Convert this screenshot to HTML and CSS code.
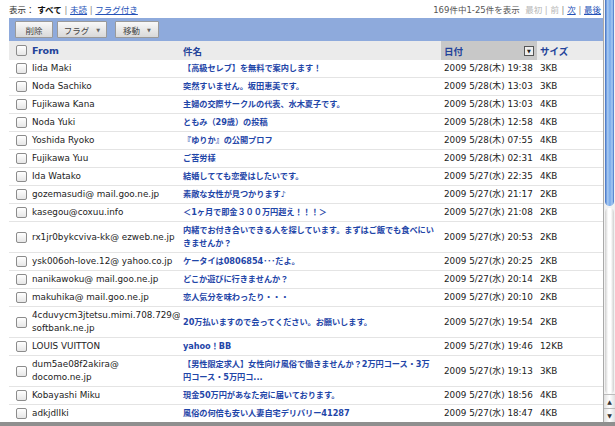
FILE: index.html
```html
<!DOCTYPE html>
<html lang="ja">
<head>
<meta charset="utf-8">
<link rel="stylesheet" href="styles.css">
</head>
<body>
<div class="window">
  <div class="main">
    <div class="topline">
      <div class="filter">表示： <b>すべて</b> <span class="sep">|</span> <a>未読</a> <span class="sep">|</span> <a>フラグ付き</a></div>
      <div class="pager">169件中1-25件を表示 &nbsp;<span class="dim">最初 | 前</span> <span class="sep">|</span> <a>次</a> <span class="sep">|</span> <a>最後</a></div>
    </div>
    <div class="toolbar">
      <span class="btn del">削除</span>
      <span class="btn menu flag">フラグ <i class="caret">▼</i></span>
      <span class="btn menu move">移動 <i class="caret">▼</i></span>
    </div>
    <table class="list">
      <colgroup><col class="c-chk"><col class="c-from"><col class="c-subj"><col class="c-date"><col class="c-size"></colgroup>
      <thead>
        <tr><th><span class="cb"></span></th><th>From</th><th>件名</th><th class="sorted"><span class="sorthead">日付<span class="sorticon">▼</span></span></th><th>サイズ</th></tr>
      </thead>
      <tbody>
        <tr><td><span class="cb"></span></td><td>Iida Maki</td><td class="subj">【高級セレブ】を無料で案内します！</td><td>2009 5/28(木) 19:38</td><td>3KB</td></tr>
        <tr><td><span class="cb"></span></td><td>Noda Sachiko</td><td class="subj">突然すいません。坂田恵美です。</td><td>2009 5/28(木) 13:03</td><td>3KB</td></tr>
        <tr><td><span class="cb"></span></td><td>Fujikawa Kana</td><td class="subj">主婦の交際サークルの代表、水木夏子です。</td><td>2009 5/28(木) 13:03</td><td>4KB</td></tr>
        <tr><td><span class="cb"></span></td><td>Noda Yuki</td><td class="subj">ともみ（29歳）の投稿</td><td>2009 5/28(木) 12:58</td><td>4KB</td></tr>
        <tr><td><span class="cb"></span></td><td>Yoshida Ryoko</td><td class="subj">『ゆりか』の公開プロフ</td><td>2009 5/28(木) 07:55</td><td>4KB</td></tr>
        <tr><td><span class="cb"></span></td><td>Fujikawa Yuu</td><td class="subj">ご苦労様</td><td>2009 5/28(木) 02:31</td><td>4KB</td></tr>
        <tr><td><span class="cb"></span></td><td>Ida Watako</td><td class="subj">結婚してても恋愛はしたいです。</td><td>2009 5/27(水) 22:35</td><td>4KB</td></tr>
        <tr><td><span class="cb"></span></td><td>gozemasudi@ mail.goo.ne.jp</td><td class="subj">素敵な女性が見つかります♪</td><td>2009 5/27(水) 21:17</td><td>2KB</td></tr>
        <tr><td><span class="cb"></span></td><td>kasegou@coxuu.info</td><td class="subj">＜1ヶ月で即金３００万円超え！！！＞</td><td>2009 5/27(水) 21:08</td><td>2KB</td></tr>
        <tr class="two"><td><span class="cb"></span></td><td>rx1jr0bykcviva-kk@ ezweb.ne.jp</td><td class="subj">内緒でお付き合いできる人を探しています。まずはご飯でも食べにいきませんか？</td><td>2009 5/27(水) 20:53</td><td>2KB</td></tr>
        <tr><td><span class="cb"></span></td><td>ysk006oh-love.12@ yahoo.co.jp</td><td class="subj">ケータイは0806854･･･だよ。</td><td>2009 5/27(水) 20:25</td><td>2KB</td></tr>
        <tr><td><span class="cb"></span></td><td>nanikawoku@ mail.goo.ne.jp</td><td class="subj">どこか遊びに行きませんか？</td><td>2009 5/27(水) 20:14</td><td>2KB</td></tr>
        <tr><td><span class="cb"></span></td><td>makuhika@ mail.goo.ne.jp</td><td class="subj">恋人気分を味わったり・・・</td><td>2009 5/27(水) 20:10</td><td>2KB</td></tr>
        <tr class="two"><td><span class="cb"></span></td><td>4cduvycm3jtetsu.mimi.708.729@<br>softbank.ne.jp</td><td class="subj">20万払いますので会ってください。お願いします。</td><td>2009 5/27(水) 19:54</td><td>2KB</td></tr>
        <tr><td><span class="cb"></span></td><td>LOUIS VUITTON</td><td class="subj">yahoo！BB</td><td>2009 5/27(水) 19:46</td><td>12KB</td></tr>
        <tr class="two"><td><span class="cb"></span></td><td>dum5ae08f2akira@<br>docomo.ne.jp</td><td class="subj">【男性限定求人】女性向け風俗で働きませんか？2万円コース・3万<br>円コース・5万円コ...</td><td>2009 5/27(水) 19:13</td><td>3KB</td></tr>
        <tr><td><span class="cb"></span></td><td>Kobayashi Miku</td><td class="subj">現金50万円があなた宛に届いております。</td><td>2009 5/27(水) 18:56</td><td>4KB</td></tr>
        <tr><td><span class="cb"></span></td><td>adkjdlIki</td><td class="subj">風俗の何倍も安い人妻自宅デリバリー41287</td><td>2009 5/27(水) 18:47</td><td>4KB</td></tr>
      </tbody>
    </table>
  </div>
  <div class="scrollbar">
    <div class="thumb"></div>
    <div class="track"></div>
    <div class="arrow">▲</div>
    <div class="arrow">▼</div>
  </div>
</div>
<div class="bottombar"></div>
</body>
</html>
```

FILE: styles.css
```css
html, body {
  margin: 0;
  padding: 0;
  background: #fff;
  overflow: hidden;
}
body {
  width: 615px;
  height: 426px;
  font-family: "DejaVu Sans", "Noto Sans CJK JP", sans-serif;
  font-size: 9px;
  color: #222;
}
.window {
  display: flex;
  height: 422px;
  overflow: hidden;
}
.main {
  flex: 1;
  padding-left: 9px;
  overflow: hidden;
}
.topline {
  height: 18px;
  display: flex;
  justify-content: space-between;
  align-items: center;
  font-size: 8.5px;
  color: #333;
  padding-right: 2px;
}
.topline b { font-weight: bold; color: #111; }
.topline a { color: #2452b8; text-decoration: underline; }
.topline .sep { color: #888; }
.pager { color: #555; }
.pager .dim { color: #b5b5b5; }
.toolbar {
  height: 23px;
  background: #8eaadc;
  display: flex;
  align-items: center;
  padding-left: 6px;
  gap: 4px;
}
.btn {
  height: 15px;
  border: 1px solid #9a9a9a;
  border-radius: 1px;
  background: linear-gradient(#f8f8f8, #d9d9d9);
  font-size: 8.5px;
  color: #444;
  display: flex;
  align-items: center;
  justify-content: center;
  box-sizing: content-box;
}
.btn.del { width: 36px; }
.btn.flag { width: 48px; }
.btn.move { width: 42px; margin-left: 4px; }
.caret {
  font-style: normal;
  font-size: 5px;
  color: #666;
  margin-left: 7px;
}
.list {
  width: 594px;
  border-collapse: collapse;
  table-layout: fixed;
}
.c-chk { width: 20px; }
.c-from { width: 151px; }
.c-subj { width: 261px; }
.c-date { width: 96px; }
.c-size { width: 66px; }
.list th {
  height: 19px;
  background: #ebebeb;
  text-align: left;
  font-weight: bold;
  color: #23439a;
  font-size: 9.5px;
  padding: 0 0 0 3px;
  vertical-align: middle;
}
.list th:first-child, .list td:first-child { padding-left: 7px; }
.list th.sorted { background: #c8c8c8; padding-right: 3px; }
.sorthead { display: flex; justify-content: space-between; align-items: center; }
.sorticon {
  width: 8px;
  height: 8px;
  border: 1px solid #555;
  background: #eee;
  font-size: 5px;
  line-height: 8px;
  text-align: center;
  color: #222;
}
.list td {
  height: 17px;
  padding: 0 0 0 3px;
  border-bottom: 1px solid #e4e4e4;
  vertical-align: middle;
  font-size: 8.8px;
  line-height: 13px;
  white-space: nowrap;
  overflow: hidden;
}
.list tr.two td { height: 30px; }
.list td.subj {
  color: #1f46a8;
  font-weight: bold;
  font-size: 8.2px;
  letter-spacing: -0.05px;
  white-space: normal;
}
.cb {
  display: block;
  width: 9px;
  height: 9px;
  border: 1px solid #8c8c8c;
  border-radius: 2px;
  background: linear-gradient(#fff, #e6e6e6);
}
.scrollbar {
  width: 12px;
  flex: none;
  display: flex;
  flex-direction: column;
  border-left: 1px solid #a9a9a9;
  box-sizing: border-box;
  background: #f2f2f2;
}
.thumb {
  height: 206px;
  margin: 0 1px;
  border-radius: 0 0 5px 5px;
  background: linear-gradient(to right, #3c6ec4, #a9cbf3 30%, #76a8ea 55%, #a9cbf3 80%, #3c6ec4);
}
.track {
  flex: 1;
  margin: 2px 1px 0;
  border-radius: 5px;
  background: linear-gradient(to right, #cfcfcf, #fff 35%, #fff 65%, #cfcfcf);
}
.arrow {
  height: 13px;
  font-size: 6px;
  line-height: 13px;
  text-align: center;
  color: #333;
  background: linear-gradient(to right, #e0e0e0, #fff 50%, #e0e0e0);
  border-top: 1px solid #bbb;
}
.bottombar {
  height: 4px;
  background: #8f8f8f;
}
```
